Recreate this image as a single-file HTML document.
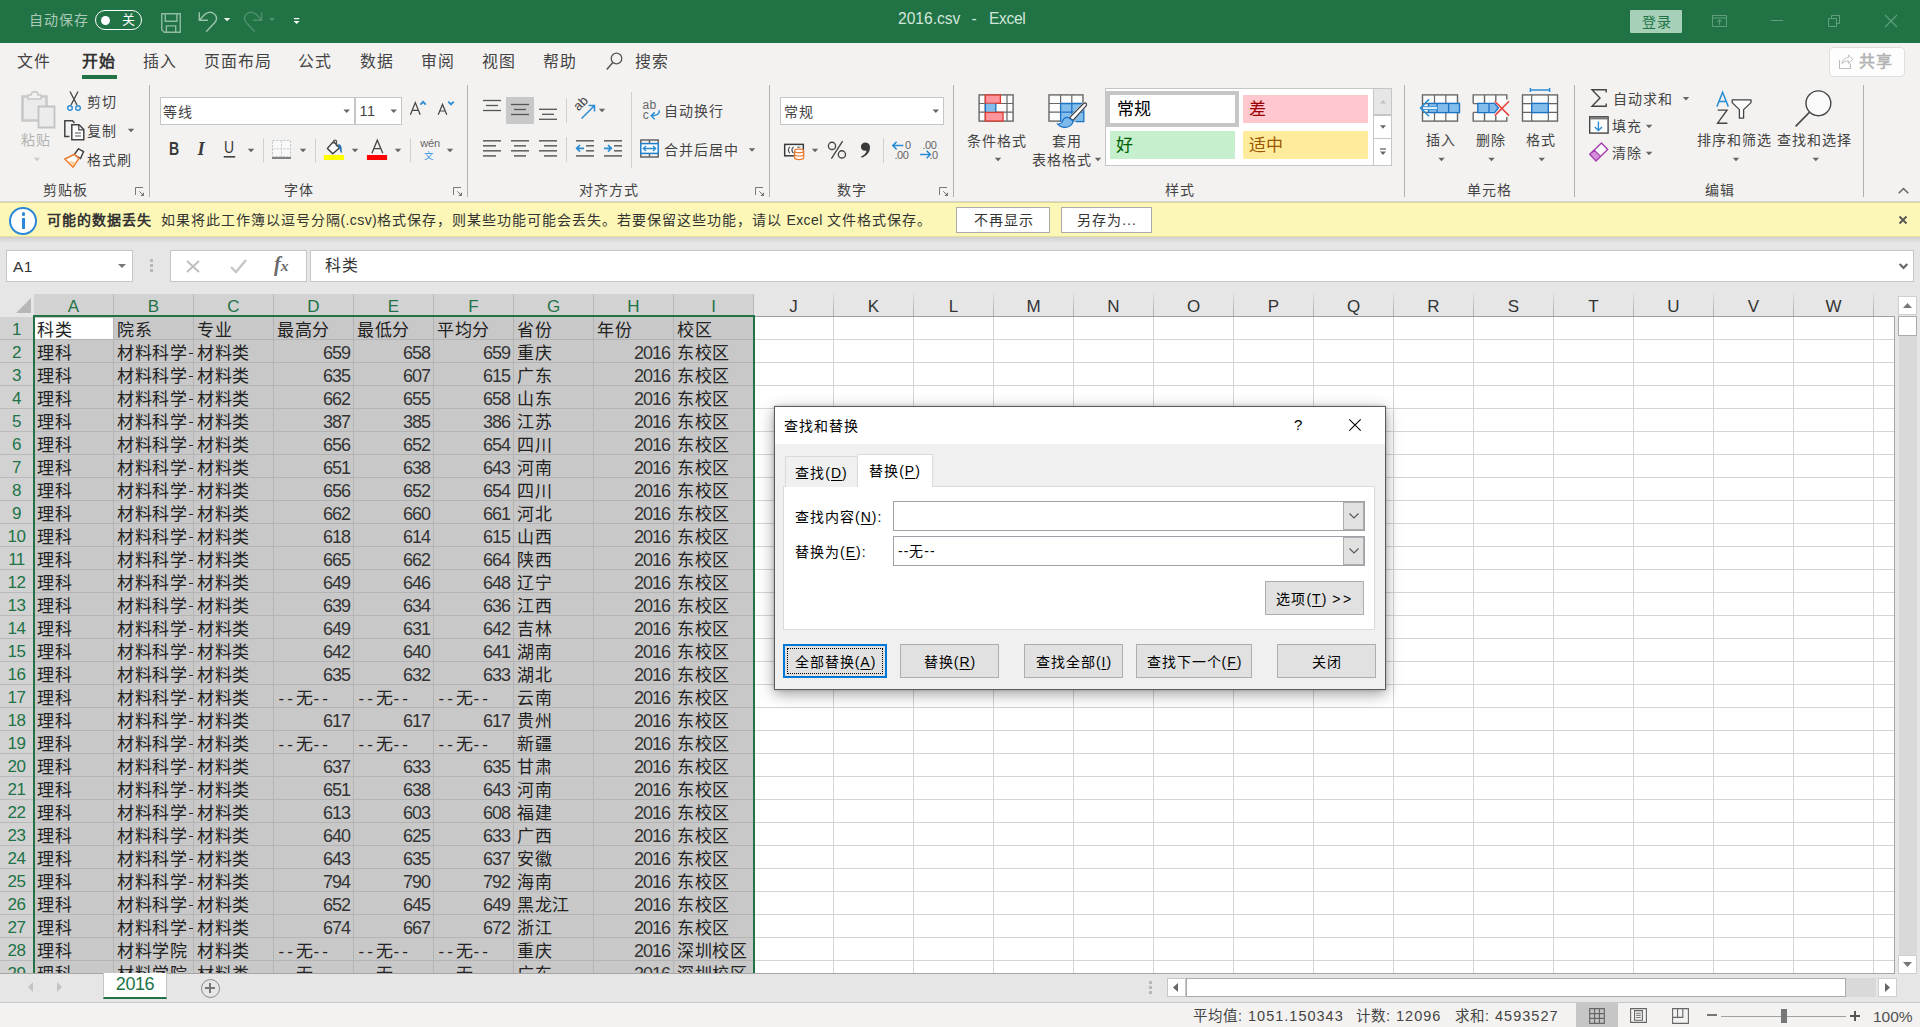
<!DOCTYPE html>
<html lang="zh-CN">
<head>
<meta charset="utf-8">
<title>2016.csv - Excel</title>
<style>
html,body{margin:0;padding:0}
body{width:1920px;height:1027px;overflow:hidden;position:relative;background:#e6e6e6;font-family:"Liberation Sans",sans-serif;font-size:15px;color:#444}
body div,body svg{position:absolute;box-sizing:border-box}
.t{white-space:nowrap}
.i{overflow:visible}
u{text-decoration:underline;text-underline-offset:2px}
.c{width:78px;height:22px;line-height:27px;font-size:17px;letter-spacing:0.7px;color:#222;white-space:nowrap;overflow:hidden;padding-left:3px;font-weight:300}
.c.r{text-align:right;padding-right:2px;padding-left:0;letter-spacing:-1px;font-size:18px;color:#333}
.c .d{letter-spacing:3px}
.l{letter-spacing:0.4px}

</style>
</head>
<body>
<div style="left:0px;top:294px;width:1898px;height:680px;background:#e6e6e6;"></div>
<div style="left:34px;top:317px;width:1860px;height:657px;background:#fff;"></div>
<div style="left:34px;top:317px;width:719px;height:657px;background:#c8c8c8;"></div>
<div style="left:35px;top:318px;width:78px;height:21px;background:#fff;"></div>
<div style="left:34px;top:294px;width:720px;height:21px;background:#d2d2d2;"></div>
<div style="left:0px;top:317px;width:33px;height:657px;background:#d2d2d2;"></div>
<div style="left:0px;top:339px;width:33px;height:1px;background:#b9b9b9;"></div>
<div style="left:35px;top:339px;width:718px;height:1px;background:#b4b4b4;"></div>
<div style="left:755px;top:339px;width:1139px;height:1px;background:#d4d4d4;"></div>
<div style="left:0px;top:362px;width:33px;height:1px;background:#b9b9b9;"></div>
<div style="left:35px;top:362px;width:718px;height:1px;background:#b4b4b4;"></div>
<div style="left:755px;top:362px;width:1139px;height:1px;background:#d4d4d4;"></div>
<div style="left:0px;top:385px;width:33px;height:1px;background:#b9b9b9;"></div>
<div style="left:35px;top:385px;width:718px;height:1px;background:#b4b4b4;"></div>
<div style="left:755px;top:385px;width:1139px;height:1px;background:#d4d4d4;"></div>
<div style="left:0px;top:408px;width:33px;height:1px;background:#b9b9b9;"></div>
<div style="left:35px;top:408px;width:718px;height:1px;background:#b4b4b4;"></div>
<div style="left:755px;top:408px;width:1139px;height:1px;background:#d4d4d4;"></div>
<div style="left:0px;top:431px;width:33px;height:1px;background:#b9b9b9;"></div>
<div style="left:35px;top:431px;width:718px;height:1px;background:#b4b4b4;"></div>
<div style="left:755px;top:431px;width:1139px;height:1px;background:#d4d4d4;"></div>
<div style="left:0px;top:454px;width:33px;height:1px;background:#b9b9b9;"></div>
<div style="left:35px;top:454px;width:718px;height:1px;background:#b4b4b4;"></div>
<div style="left:755px;top:454px;width:1139px;height:1px;background:#d4d4d4;"></div>
<div style="left:0px;top:477px;width:33px;height:1px;background:#b9b9b9;"></div>
<div style="left:35px;top:477px;width:718px;height:1px;background:#b4b4b4;"></div>
<div style="left:755px;top:477px;width:1139px;height:1px;background:#d4d4d4;"></div>
<div style="left:0px;top:500px;width:33px;height:1px;background:#b9b9b9;"></div>
<div style="left:35px;top:500px;width:718px;height:1px;background:#b4b4b4;"></div>
<div style="left:755px;top:500px;width:1139px;height:1px;background:#d4d4d4;"></div>
<div style="left:0px;top:523px;width:33px;height:1px;background:#b9b9b9;"></div>
<div style="left:35px;top:523px;width:718px;height:1px;background:#b4b4b4;"></div>
<div style="left:755px;top:523px;width:1139px;height:1px;background:#d4d4d4;"></div>
<div style="left:0px;top:546px;width:33px;height:1px;background:#b9b9b9;"></div>
<div style="left:35px;top:546px;width:718px;height:1px;background:#b4b4b4;"></div>
<div style="left:755px;top:546px;width:1139px;height:1px;background:#d4d4d4;"></div>
<div style="left:0px;top:569px;width:33px;height:1px;background:#b9b9b9;"></div>
<div style="left:35px;top:569px;width:718px;height:1px;background:#b4b4b4;"></div>
<div style="left:755px;top:569px;width:1139px;height:1px;background:#d4d4d4;"></div>
<div style="left:0px;top:592px;width:33px;height:1px;background:#b9b9b9;"></div>
<div style="left:35px;top:592px;width:718px;height:1px;background:#b4b4b4;"></div>
<div style="left:755px;top:592px;width:1139px;height:1px;background:#d4d4d4;"></div>
<div style="left:0px;top:615px;width:33px;height:1px;background:#b9b9b9;"></div>
<div style="left:35px;top:615px;width:718px;height:1px;background:#b4b4b4;"></div>
<div style="left:755px;top:615px;width:1139px;height:1px;background:#d4d4d4;"></div>
<div style="left:0px;top:638px;width:33px;height:1px;background:#b9b9b9;"></div>
<div style="left:35px;top:638px;width:718px;height:1px;background:#b4b4b4;"></div>
<div style="left:755px;top:638px;width:1139px;height:1px;background:#d4d4d4;"></div>
<div style="left:0px;top:661px;width:33px;height:1px;background:#b9b9b9;"></div>
<div style="left:35px;top:661px;width:718px;height:1px;background:#b4b4b4;"></div>
<div style="left:755px;top:661px;width:1139px;height:1px;background:#d4d4d4;"></div>
<div style="left:0px;top:684px;width:33px;height:1px;background:#b9b9b9;"></div>
<div style="left:35px;top:684px;width:718px;height:1px;background:#b4b4b4;"></div>
<div style="left:755px;top:684px;width:1139px;height:1px;background:#d4d4d4;"></div>
<div style="left:0px;top:707px;width:33px;height:1px;background:#b9b9b9;"></div>
<div style="left:35px;top:707px;width:718px;height:1px;background:#b4b4b4;"></div>
<div style="left:755px;top:707px;width:1139px;height:1px;background:#d4d4d4;"></div>
<div style="left:0px;top:730px;width:33px;height:1px;background:#b9b9b9;"></div>
<div style="left:35px;top:730px;width:718px;height:1px;background:#b4b4b4;"></div>
<div style="left:755px;top:730px;width:1139px;height:1px;background:#d4d4d4;"></div>
<div style="left:0px;top:753px;width:33px;height:1px;background:#b9b9b9;"></div>
<div style="left:35px;top:753px;width:718px;height:1px;background:#b4b4b4;"></div>
<div style="left:755px;top:753px;width:1139px;height:1px;background:#d4d4d4;"></div>
<div style="left:0px;top:776px;width:33px;height:1px;background:#b9b9b9;"></div>
<div style="left:35px;top:776px;width:718px;height:1px;background:#b4b4b4;"></div>
<div style="left:755px;top:776px;width:1139px;height:1px;background:#d4d4d4;"></div>
<div style="left:0px;top:799px;width:33px;height:1px;background:#b9b9b9;"></div>
<div style="left:35px;top:799px;width:718px;height:1px;background:#b4b4b4;"></div>
<div style="left:755px;top:799px;width:1139px;height:1px;background:#d4d4d4;"></div>
<div style="left:0px;top:822px;width:33px;height:1px;background:#b9b9b9;"></div>
<div style="left:35px;top:822px;width:718px;height:1px;background:#b4b4b4;"></div>
<div style="left:755px;top:822px;width:1139px;height:1px;background:#d4d4d4;"></div>
<div style="left:0px;top:845px;width:33px;height:1px;background:#b9b9b9;"></div>
<div style="left:35px;top:845px;width:718px;height:1px;background:#b4b4b4;"></div>
<div style="left:755px;top:845px;width:1139px;height:1px;background:#d4d4d4;"></div>
<div style="left:0px;top:868px;width:33px;height:1px;background:#b9b9b9;"></div>
<div style="left:35px;top:868px;width:718px;height:1px;background:#b4b4b4;"></div>
<div style="left:755px;top:868px;width:1139px;height:1px;background:#d4d4d4;"></div>
<div style="left:0px;top:891px;width:33px;height:1px;background:#b9b9b9;"></div>
<div style="left:35px;top:891px;width:718px;height:1px;background:#b4b4b4;"></div>
<div style="left:755px;top:891px;width:1139px;height:1px;background:#d4d4d4;"></div>
<div style="left:0px;top:914px;width:33px;height:1px;background:#b9b9b9;"></div>
<div style="left:35px;top:914px;width:718px;height:1px;background:#b4b4b4;"></div>
<div style="left:755px;top:914px;width:1139px;height:1px;background:#d4d4d4;"></div>
<div style="left:0px;top:937px;width:33px;height:1px;background:#b9b9b9;"></div>
<div style="left:35px;top:937px;width:718px;height:1px;background:#b4b4b4;"></div>
<div style="left:755px;top:937px;width:1139px;height:1px;background:#d4d4d4;"></div>
<div style="left:0px;top:960px;width:33px;height:1px;background:#b9b9b9;"></div>
<div style="left:35px;top:960px;width:718px;height:1px;background:#b4b4b4;"></div>
<div style="left:755px;top:960px;width:1139px;height:1px;background:#d4d4d4;"></div>
<div style="left:113px;top:317px;width:1px;height:657px;background:#b4b4b4;"></div>
<div style="left:113px;top:294px;width:1px;height:21px;background:#b9b9b9;"></div>
<div style="left:193px;top:317px;width:1px;height:657px;background:#b4b4b4;"></div>
<div style="left:193px;top:294px;width:1px;height:21px;background:#b9b9b9;"></div>
<div style="left:273px;top:317px;width:1px;height:657px;background:#b4b4b4;"></div>
<div style="left:273px;top:294px;width:1px;height:21px;background:#b9b9b9;"></div>
<div style="left:353px;top:317px;width:1px;height:657px;background:#b4b4b4;"></div>
<div style="left:353px;top:294px;width:1px;height:21px;background:#b9b9b9;"></div>
<div style="left:433px;top:317px;width:1px;height:657px;background:#b4b4b4;"></div>
<div style="left:433px;top:294px;width:1px;height:21px;background:#b9b9b9;"></div>
<div style="left:513px;top:317px;width:1px;height:657px;background:#b4b4b4;"></div>
<div style="left:513px;top:294px;width:1px;height:21px;background:#b9b9b9;"></div>
<div style="left:593px;top:317px;width:1px;height:657px;background:#b4b4b4;"></div>
<div style="left:593px;top:294px;width:1px;height:21px;background:#b9b9b9;"></div>
<div style="left:673px;top:317px;width:1px;height:657px;background:#b4b4b4;"></div>
<div style="left:673px;top:294px;width:1px;height:21px;background:#b9b9b9;"></div>
<div style="left:753px;top:294px;width:1px;height:22px;background:#b9b9b9;"></div>
<div style="left:833px;top:317px;width:1px;height:657px;background:#d4d4d4;"></div>
<div style="left:833px;top:294px;width:1px;height:22px;background:linear-gradient(#dcdcdc,#a8a8a8);"></div>
<div style="left:913px;top:317px;width:1px;height:657px;background:#d4d4d4;"></div>
<div style="left:913px;top:294px;width:1px;height:22px;background:linear-gradient(#dcdcdc,#a8a8a8);"></div>
<div style="left:993px;top:317px;width:1px;height:657px;background:#d4d4d4;"></div>
<div style="left:993px;top:294px;width:1px;height:22px;background:linear-gradient(#dcdcdc,#a8a8a8);"></div>
<div style="left:1073px;top:317px;width:1px;height:657px;background:#d4d4d4;"></div>
<div style="left:1073px;top:294px;width:1px;height:22px;background:linear-gradient(#dcdcdc,#a8a8a8);"></div>
<div style="left:1153px;top:317px;width:1px;height:657px;background:#d4d4d4;"></div>
<div style="left:1153px;top:294px;width:1px;height:22px;background:linear-gradient(#dcdcdc,#a8a8a8);"></div>
<div style="left:1233px;top:317px;width:1px;height:657px;background:#d4d4d4;"></div>
<div style="left:1233px;top:294px;width:1px;height:22px;background:linear-gradient(#dcdcdc,#a8a8a8);"></div>
<div style="left:1313px;top:317px;width:1px;height:657px;background:#d4d4d4;"></div>
<div style="left:1313px;top:294px;width:1px;height:22px;background:linear-gradient(#dcdcdc,#a8a8a8);"></div>
<div style="left:1393px;top:317px;width:1px;height:657px;background:#d4d4d4;"></div>
<div style="left:1393px;top:294px;width:1px;height:22px;background:linear-gradient(#dcdcdc,#a8a8a8);"></div>
<div style="left:1473px;top:317px;width:1px;height:657px;background:#d4d4d4;"></div>
<div style="left:1473px;top:294px;width:1px;height:22px;background:linear-gradient(#dcdcdc,#a8a8a8);"></div>
<div style="left:1553px;top:317px;width:1px;height:657px;background:#d4d4d4;"></div>
<div style="left:1553px;top:294px;width:1px;height:22px;background:linear-gradient(#dcdcdc,#a8a8a8);"></div>
<div style="left:1633px;top:317px;width:1px;height:657px;background:#d4d4d4;"></div>
<div style="left:1633px;top:294px;width:1px;height:22px;background:linear-gradient(#dcdcdc,#a8a8a8);"></div>
<div style="left:1713px;top:317px;width:1px;height:657px;background:#d4d4d4;"></div>
<div style="left:1713px;top:294px;width:1px;height:22px;background:linear-gradient(#dcdcdc,#a8a8a8);"></div>
<div style="left:1793px;top:317px;width:1px;height:657px;background:#d4d4d4;"></div>
<div style="left:1793px;top:294px;width:1px;height:22px;background:linear-gradient(#dcdcdc,#a8a8a8);"></div>
<div style="left:1873px;top:317px;width:1px;height:657px;background:#d4d4d4;"></div>
<div style="left:1873px;top:294px;width:1px;height:22px;background:linear-gradient(#dcdcdc,#a8a8a8);"></div>
<div style="left:755px;top:316px;width:1140px;height:1px;background:#9f9f9f;"></div>
<div style="left:1894px;top:316px;width:1px;height:658px;background:#a6a6a6;"></div>
<svg class="i" style="left:16px;top:298px;" width="15" height="15" viewBox="0 0 15 15"><path d="M15 0V15H0Z" fill="#b7b7b7"/></svg>
<div class="t" style="left:34.5px;top:295.5px;font-size:17px;line-height:22px;color:#217346;width:78px;text-align:center;">A</div>
<div class="t" style="left:114.5px;top:295.5px;font-size:17px;line-height:22px;color:#217346;width:78px;text-align:center;">B</div>
<div class="t" style="left:194.5px;top:295.5px;font-size:17px;line-height:22px;color:#217346;width:78px;text-align:center;">C</div>
<div class="t" style="left:274.5px;top:295.5px;font-size:17px;line-height:22px;color:#217346;width:78px;text-align:center;">D</div>
<div class="t" style="left:354.5px;top:295.5px;font-size:17px;line-height:22px;color:#217346;width:78px;text-align:center;">E</div>
<div class="t" style="left:434.5px;top:295.5px;font-size:17px;line-height:22px;color:#217346;width:78px;text-align:center;">F</div>
<div class="t" style="left:514.5px;top:295.5px;font-size:17px;line-height:22px;color:#217346;width:78px;text-align:center;">G</div>
<div class="t" style="left:594.5px;top:295.5px;font-size:17px;line-height:22px;color:#217346;width:78px;text-align:center;">H</div>
<div class="t" style="left:674.5px;top:295.5px;font-size:17px;line-height:22px;color:#217346;width:78px;text-align:center;">I</div>
<div class="t" style="left:754.5px;top:295.5px;font-size:17px;line-height:22px;color:#333;width:78px;text-align:center;">J</div>
<div class="t" style="left:834.5px;top:295.5px;font-size:17px;line-height:22px;color:#333;width:78px;text-align:center;">K</div>
<div class="t" style="left:914.5px;top:295.5px;font-size:17px;line-height:22px;color:#333;width:78px;text-align:center;">L</div>
<div class="t" style="left:994.5px;top:295.5px;font-size:17px;line-height:22px;color:#333;width:78px;text-align:center;">M</div>
<div class="t" style="left:1074.5px;top:295.5px;font-size:17px;line-height:22px;color:#333;width:78px;text-align:center;">N</div>
<div class="t" style="left:1154.5px;top:295.5px;font-size:17px;line-height:22px;color:#333;width:78px;text-align:center;">O</div>
<div class="t" style="left:1234.5px;top:295.5px;font-size:17px;line-height:22px;color:#333;width:78px;text-align:center;">P</div>
<div class="t" style="left:1314.5px;top:295.5px;font-size:17px;line-height:22px;color:#333;width:78px;text-align:center;">Q</div>
<div class="t" style="left:1394.5px;top:295.5px;font-size:17px;line-height:22px;color:#333;width:78px;text-align:center;">R</div>
<div class="t" style="left:1474.5px;top:295.5px;font-size:17px;line-height:22px;color:#333;width:78px;text-align:center;">S</div>
<div class="t" style="left:1554.5px;top:295.5px;font-size:17px;line-height:22px;color:#333;width:78px;text-align:center;">T</div>
<div class="t" style="left:1634.5px;top:295.5px;font-size:17px;line-height:22px;color:#333;width:78px;text-align:center;">U</div>
<div class="t" style="left:1714.5px;top:295.5px;font-size:17px;line-height:22px;color:#333;width:78px;text-align:center;">V</div>
<div class="t" style="left:1794.5px;top:295.5px;font-size:17px;line-height:22px;color:#333;width:78px;text-align:center;">W</div>
<div class="t" style="left:0.0px;top:318.5px;font-size:17px;line-height:22px;color:#217346;width:33px;text-align:center;letter-spacing:-0.5px;">1</div>
<div class="t" style="left:0.0px;top:341.5px;font-size:17px;line-height:22px;color:#217346;width:33px;text-align:center;letter-spacing:-0.5px;">2</div>
<div class="t" style="left:0.0px;top:364.5px;font-size:17px;line-height:22px;color:#217346;width:33px;text-align:center;letter-spacing:-0.5px;">3</div>
<div class="t" style="left:0.0px;top:387.5px;font-size:17px;line-height:22px;color:#217346;width:33px;text-align:center;letter-spacing:-0.5px;">4</div>
<div class="t" style="left:0.0px;top:410.5px;font-size:17px;line-height:22px;color:#217346;width:33px;text-align:center;letter-spacing:-0.5px;">5</div>
<div class="t" style="left:0.0px;top:433.5px;font-size:17px;line-height:22px;color:#217346;width:33px;text-align:center;letter-spacing:-0.5px;">6</div>
<div class="t" style="left:0.0px;top:456.5px;font-size:17px;line-height:22px;color:#217346;width:33px;text-align:center;letter-spacing:-0.5px;">7</div>
<div class="t" style="left:0.0px;top:479.5px;font-size:17px;line-height:22px;color:#217346;width:33px;text-align:center;letter-spacing:-0.5px;">8</div>
<div class="t" style="left:0.0px;top:502.5px;font-size:17px;line-height:22px;color:#217346;width:33px;text-align:center;letter-spacing:-0.5px;">9</div>
<div class="t" style="left:0.0px;top:525.5px;font-size:17px;line-height:22px;color:#217346;width:33px;text-align:center;letter-spacing:-0.5px;">10</div>
<div class="t" style="left:0.0px;top:548.5px;font-size:17px;line-height:22px;color:#217346;width:33px;text-align:center;letter-spacing:-0.5px;">11</div>
<div class="t" style="left:0.0px;top:571.5px;font-size:17px;line-height:22px;color:#217346;width:33px;text-align:center;letter-spacing:-0.5px;">12</div>
<div class="t" style="left:0.0px;top:594.5px;font-size:17px;line-height:22px;color:#217346;width:33px;text-align:center;letter-spacing:-0.5px;">13</div>
<div class="t" style="left:0.0px;top:617.5px;font-size:17px;line-height:22px;color:#217346;width:33px;text-align:center;letter-spacing:-0.5px;">14</div>
<div class="t" style="left:0.0px;top:640.5px;font-size:17px;line-height:22px;color:#217346;width:33px;text-align:center;letter-spacing:-0.5px;">15</div>
<div class="t" style="left:0.0px;top:663.5px;font-size:17px;line-height:22px;color:#217346;width:33px;text-align:center;letter-spacing:-0.5px;">16</div>
<div class="t" style="left:0.0px;top:686.5px;font-size:17px;line-height:22px;color:#217346;width:33px;text-align:center;letter-spacing:-0.5px;">17</div>
<div class="t" style="left:0.0px;top:709.5px;font-size:17px;line-height:22px;color:#217346;width:33px;text-align:center;letter-spacing:-0.5px;">18</div>
<div class="t" style="left:0.0px;top:732.5px;font-size:17px;line-height:22px;color:#217346;width:33px;text-align:center;letter-spacing:-0.5px;">19</div>
<div class="t" style="left:0.0px;top:755.5px;font-size:17px;line-height:22px;color:#217346;width:33px;text-align:center;letter-spacing:-0.5px;">20</div>
<div class="t" style="left:0.0px;top:778.5px;font-size:17px;line-height:22px;color:#217346;width:33px;text-align:center;letter-spacing:-0.5px;">21</div>
<div class="t" style="left:0.0px;top:801.5px;font-size:17px;line-height:22px;color:#217346;width:33px;text-align:center;letter-spacing:-0.5px;">22</div>
<div class="t" style="left:0.0px;top:824.5px;font-size:17px;line-height:22px;color:#217346;width:33px;text-align:center;letter-spacing:-0.5px;">23</div>
<div class="t" style="left:0.0px;top:847.5px;font-size:17px;line-height:22px;color:#217346;width:33px;text-align:center;letter-spacing:-0.5px;">24</div>
<div class="t" style="left:0.0px;top:870.5px;font-size:17px;line-height:22px;color:#217346;width:33px;text-align:center;letter-spacing:-0.5px;">25</div>
<div class="t" style="left:0.0px;top:893.5px;font-size:17px;line-height:22px;color:#217346;width:33px;text-align:center;letter-spacing:-0.5px;">26</div>
<div class="t" style="left:0.0px;top:916.5px;font-size:17px;line-height:22px;color:#217346;width:33px;text-align:center;letter-spacing:-0.5px;">27</div>
<div class="t" style="left:0.0px;top:939.5px;font-size:17px;line-height:22px;color:#217346;width:33px;text-align:center;letter-spacing:-0.5px;">28</div>
<div class="t" style="left:0.0px;top:962.5px;font-size:17px;line-height:22px;color:#217346;width:33px;text-align:center;letter-spacing:-0.5px;">29</div>
<div style="left:0;top:294px;width:1898px;height:679px;overflow:hidden;"><div style="left:0;top:-294px;width:1898px;height:980px;">
<div class="c" style="left:34px;top:317px;">科类</div>
<div class="c" style="left:114px;top:317px;">院系</div>
<div class="c" style="left:194px;top:317px;">专业</div>
<div class="c" style="left:274px;top:317px;">最高分</div>
<div class="c" style="left:354px;top:317px;">最低分</div>
<div class="c" style="left:434px;top:317px;">平均分</div>
<div class="c" style="left:514px;top:317px;">省份</div>
<div class="c" style="left:594px;top:317px;">年份</div>
<div class="c" style="left:674px;top:317px;">校区</div>
<div class="c" style="left:34px;top:340px;">理科</div>
<div class="c" style="left:114px;top:340px;width:74px;">材料科学与工程学院</div>
<div style="left:188.5px;top:353px;width:4px;height:1.2px;background:#222;"></div>
<div class="c" style="left:194px;top:340px;">材料类</div>
<div class="c r" style="left:274px;top:340px;">659</div>
<div class="c r" style="left:354px;top:340px;">658</div>
<div class="c r" style="left:434px;top:340px;">659</div>
<div class="c" style="left:514px;top:340px;">重庆</div>
<div class="c r" style="left:594px;top:340px;">2016</div>
<div class="c" style="left:674px;top:340px;">东校区</div>
<div class="c" style="left:34px;top:363px;">理科</div>
<div class="c" style="left:114px;top:363px;width:74px;">材料科学与工程学院</div>
<div style="left:188.5px;top:376px;width:4px;height:1.2px;background:#222;"></div>
<div class="c" style="left:194px;top:363px;">材料类</div>
<div class="c r" style="left:274px;top:363px;">635</div>
<div class="c r" style="left:354px;top:363px;">607</div>
<div class="c r" style="left:434px;top:363px;">615</div>
<div class="c" style="left:514px;top:363px;">广东</div>
<div class="c r" style="left:594px;top:363px;">2016</div>
<div class="c" style="left:674px;top:363px;">东校区</div>
<div class="c" style="left:34px;top:386px;">理科</div>
<div class="c" style="left:114px;top:386px;width:74px;">材料科学与工程学院</div>
<div style="left:188.5px;top:399px;width:4px;height:1.2px;background:#222;"></div>
<div class="c" style="left:194px;top:386px;">材料类</div>
<div class="c r" style="left:274px;top:386px;">662</div>
<div class="c r" style="left:354px;top:386px;">655</div>
<div class="c r" style="left:434px;top:386px;">658</div>
<div class="c" style="left:514px;top:386px;">山东</div>
<div class="c r" style="left:594px;top:386px;">2016</div>
<div class="c" style="left:674px;top:386px;">东校区</div>
<div class="c" style="left:34px;top:409px;">理科</div>
<div class="c" style="left:114px;top:409px;width:74px;">材料科学与工程学院</div>
<div style="left:188.5px;top:422px;width:4px;height:1.2px;background:#222;"></div>
<div class="c" style="left:194px;top:409px;">材料类</div>
<div class="c r" style="left:274px;top:409px;">387</div>
<div class="c r" style="left:354px;top:409px;">385</div>
<div class="c r" style="left:434px;top:409px;">386</div>
<div class="c" style="left:514px;top:409px;">江苏</div>
<div class="c r" style="left:594px;top:409px;">2016</div>
<div class="c" style="left:674px;top:409px;">东校区</div>
<div class="c" style="left:34px;top:432px;">理科</div>
<div class="c" style="left:114px;top:432px;width:74px;">材料科学与工程学院</div>
<div style="left:188.5px;top:445px;width:4px;height:1.2px;background:#222;"></div>
<div class="c" style="left:194px;top:432px;">材料类</div>
<div class="c r" style="left:274px;top:432px;">656</div>
<div class="c r" style="left:354px;top:432px;">652</div>
<div class="c r" style="left:434px;top:432px;">654</div>
<div class="c" style="left:514px;top:432px;">四川</div>
<div class="c r" style="left:594px;top:432px;">2016</div>
<div class="c" style="left:674px;top:432px;">东校区</div>
<div class="c" style="left:34px;top:455px;">理科</div>
<div class="c" style="left:114px;top:455px;width:74px;">材料科学与工程学院</div>
<div style="left:188.5px;top:468px;width:4px;height:1.2px;background:#222;"></div>
<div class="c" style="left:194px;top:455px;">材料类</div>
<div class="c r" style="left:274px;top:455px;">651</div>
<div class="c r" style="left:354px;top:455px;">638</div>
<div class="c r" style="left:434px;top:455px;">643</div>
<div class="c" style="left:514px;top:455px;">河南</div>
<div class="c r" style="left:594px;top:455px;">2016</div>
<div class="c" style="left:674px;top:455px;">东校区</div>
<div class="c" style="left:34px;top:478px;">理科</div>
<div class="c" style="left:114px;top:478px;width:74px;">材料科学与工程学院</div>
<div style="left:188.5px;top:491px;width:4px;height:1.2px;background:#222;"></div>
<div class="c" style="left:194px;top:478px;">材料类</div>
<div class="c r" style="left:274px;top:478px;">656</div>
<div class="c r" style="left:354px;top:478px;">652</div>
<div class="c r" style="left:434px;top:478px;">654</div>
<div class="c" style="left:514px;top:478px;">四川</div>
<div class="c r" style="left:594px;top:478px;">2016</div>
<div class="c" style="left:674px;top:478px;">东校区</div>
<div class="c" style="left:34px;top:501px;">理科</div>
<div class="c" style="left:114px;top:501px;width:74px;">材料科学与工程学院</div>
<div style="left:188.5px;top:514px;width:4px;height:1.2px;background:#222;"></div>
<div class="c" style="left:194px;top:501px;">材料类</div>
<div class="c r" style="left:274px;top:501px;">662</div>
<div class="c r" style="left:354px;top:501px;">660</div>
<div class="c r" style="left:434px;top:501px;">661</div>
<div class="c" style="left:514px;top:501px;">河北</div>
<div class="c r" style="left:594px;top:501px;">2016</div>
<div class="c" style="left:674px;top:501px;">东校区</div>
<div class="c" style="left:34px;top:524px;">理科</div>
<div class="c" style="left:114px;top:524px;width:74px;">材料科学与工程学院</div>
<div style="left:188.5px;top:537px;width:4px;height:1.2px;background:#222;"></div>
<div class="c" style="left:194px;top:524px;">材料类</div>
<div class="c r" style="left:274px;top:524px;">618</div>
<div class="c r" style="left:354px;top:524px;">614</div>
<div class="c r" style="left:434px;top:524px;">615</div>
<div class="c" style="left:514px;top:524px;">山西</div>
<div class="c r" style="left:594px;top:524px;">2016</div>
<div class="c" style="left:674px;top:524px;">东校区</div>
<div class="c" style="left:34px;top:547px;">理科</div>
<div class="c" style="left:114px;top:547px;width:74px;">材料科学与工程学院</div>
<div style="left:188.5px;top:560px;width:4px;height:1.2px;background:#222;"></div>
<div class="c" style="left:194px;top:547px;">材料类</div>
<div class="c r" style="left:274px;top:547px;">665</div>
<div class="c r" style="left:354px;top:547px;">662</div>
<div class="c r" style="left:434px;top:547px;">664</div>
<div class="c" style="left:514px;top:547px;">陕西</div>
<div class="c r" style="left:594px;top:547px;">2016</div>
<div class="c" style="left:674px;top:547px;">东校区</div>
<div class="c" style="left:34px;top:570px;">理科</div>
<div class="c" style="left:114px;top:570px;width:74px;">材料科学与工程学院</div>
<div style="left:188.5px;top:583px;width:4px;height:1.2px;background:#222;"></div>
<div class="c" style="left:194px;top:570px;">材料类</div>
<div class="c r" style="left:274px;top:570px;">649</div>
<div class="c r" style="left:354px;top:570px;">646</div>
<div class="c r" style="left:434px;top:570px;">648</div>
<div class="c" style="left:514px;top:570px;">辽宁</div>
<div class="c r" style="left:594px;top:570px;">2016</div>
<div class="c" style="left:674px;top:570px;">东校区</div>
<div class="c" style="left:34px;top:593px;">理科</div>
<div class="c" style="left:114px;top:593px;width:74px;">材料科学与工程学院</div>
<div style="left:188.5px;top:606px;width:4px;height:1.2px;background:#222;"></div>
<div class="c" style="left:194px;top:593px;">材料类</div>
<div class="c r" style="left:274px;top:593px;">639</div>
<div class="c r" style="left:354px;top:593px;">634</div>
<div class="c r" style="left:434px;top:593px;">636</div>
<div class="c" style="left:514px;top:593px;">江西</div>
<div class="c r" style="left:594px;top:593px;">2016</div>
<div class="c" style="left:674px;top:593px;">东校区</div>
<div class="c" style="left:34px;top:616px;">理科</div>
<div class="c" style="left:114px;top:616px;width:74px;">材料科学与工程学院</div>
<div style="left:188.5px;top:629px;width:4px;height:1.2px;background:#222;"></div>
<div class="c" style="left:194px;top:616px;">材料类</div>
<div class="c r" style="left:274px;top:616px;">649</div>
<div class="c r" style="left:354px;top:616px;">631</div>
<div class="c r" style="left:434px;top:616px;">642</div>
<div class="c" style="left:514px;top:616px;">吉林</div>
<div class="c r" style="left:594px;top:616px;">2016</div>
<div class="c" style="left:674px;top:616px;">东校区</div>
<div class="c" style="left:34px;top:639px;">理科</div>
<div class="c" style="left:114px;top:639px;width:74px;">材料科学与工程学院</div>
<div style="left:188.5px;top:652px;width:4px;height:1.2px;background:#222;"></div>
<div class="c" style="left:194px;top:639px;">材料类</div>
<div class="c r" style="left:274px;top:639px;">642</div>
<div class="c r" style="left:354px;top:639px;">640</div>
<div class="c r" style="left:434px;top:639px;">641</div>
<div class="c" style="left:514px;top:639px;">湖南</div>
<div class="c r" style="left:594px;top:639px;">2016</div>
<div class="c" style="left:674px;top:639px;">东校区</div>
<div class="c" style="left:34px;top:662px;">理科</div>
<div class="c" style="left:114px;top:662px;width:74px;">材料科学与工程学院</div>
<div style="left:188.5px;top:675px;width:4px;height:1.2px;background:#222;"></div>
<div class="c" style="left:194px;top:662px;">材料类</div>
<div class="c r" style="left:274px;top:662px;">635</div>
<div class="c r" style="left:354px;top:662px;">632</div>
<div class="c r" style="left:434px;top:662px;">633</div>
<div class="c" style="left:514px;top:662px;">湖北</div>
<div class="c r" style="left:594px;top:662px;">2016</div>
<div class="c" style="left:674px;top:662px;">东校区</div>
<div class="c" style="left:34px;top:685px;">理科</div>
<div class="c" style="left:114px;top:685px;width:74px;">材料科学与工程学院</div>
<div style="left:188.5px;top:698px;width:4px;height:1.2px;background:#222;"></div>
<div class="c" style="left:194px;top:685px;">材料类</div>
<div class="c" style="left:274px;top:685px;padding-left:4.5px;"><span class="d">--</span>无<span class="d">--</span></div>
<div class="c" style="left:354px;top:685px;padding-left:4.5px;"><span class="d">--</span>无<span class="d">--</span></div>
<div class="c" style="left:434px;top:685px;padding-left:4.5px;"><span class="d">--</span>无<span class="d">--</span></div>
<div class="c" style="left:514px;top:685px;">云南</div>
<div class="c r" style="left:594px;top:685px;">2016</div>
<div class="c" style="left:674px;top:685px;">东校区</div>
<div class="c" style="left:34px;top:708px;">理科</div>
<div class="c" style="left:114px;top:708px;width:74px;">材料科学与工程学院</div>
<div style="left:188.5px;top:721px;width:4px;height:1.2px;background:#222;"></div>
<div class="c" style="left:194px;top:708px;">材料类</div>
<div class="c r" style="left:274px;top:708px;">617</div>
<div class="c r" style="left:354px;top:708px;">617</div>
<div class="c r" style="left:434px;top:708px;">617</div>
<div class="c" style="left:514px;top:708px;">贵州</div>
<div class="c r" style="left:594px;top:708px;">2016</div>
<div class="c" style="left:674px;top:708px;">东校区</div>
<div class="c" style="left:34px;top:731px;">理科</div>
<div class="c" style="left:114px;top:731px;width:74px;">材料科学与工程学院</div>
<div style="left:188.5px;top:744px;width:4px;height:1.2px;background:#222;"></div>
<div class="c" style="left:194px;top:731px;">材料类</div>
<div class="c" style="left:274px;top:731px;padding-left:4.5px;"><span class="d">--</span>无<span class="d">--</span></div>
<div class="c" style="left:354px;top:731px;padding-left:4.5px;"><span class="d">--</span>无<span class="d">--</span></div>
<div class="c" style="left:434px;top:731px;padding-left:4.5px;"><span class="d">--</span>无<span class="d">--</span></div>
<div class="c" style="left:514px;top:731px;">新疆</div>
<div class="c r" style="left:594px;top:731px;">2016</div>
<div class="c" style="left:674px;top:731px;">东校区</div>
<div class="c" style="left:34px;top:754px;">理科</div>
<div class="c" style="left:114px;top:754px;width:74px;">材料科学与工程学院</div>
<div style="left:188.5px;top:767px;width:4px;height:1.2px;background:#222;"></div>
<div class="c" style="left:194px;top:754px;">材料类</div>
<div class="c r" style="left:274px;top:754px;">637</div>
<div class="c r" style="left:354px;top:754px;">633</div>
<div class="c r" style="left:434px;top:754px;">635</div>
<div class="c" style="left:514px;top:754px;">甘肃</div>
<div class="c r" style="left:594px;top:754px;">2016</div>
<div class="c" style="left:674px;top:754px;">东校区</div>
<div class="c" style="left:34px;top:777px;">理科</div>
<div class="c" style="left:114px;top:777px;width:74px;">材料科学与工程学院</div>
<div style="left:188.5px;top:790px;width:4px;height:1.2px;background:#222;"></div>
<div class="c" style="left:194px;top:777px;">材料类</div>
<div class="c r" style="left:274px;top:777px;">651</div>
<div class="c r" style="left:354px;top:777px;">638</div>
<div class="c r" style="left:434px;top:777px;">643</div>
<div class="c" style="left:514px;top:777px;">河南</div>
<div class="c r" style="left:594px;top:777px;">2016</div>
<div class="c" style="left:674px;top:777px;">东校区</div>
<div class="c" style="left:34px;top:800px;">理科</div>
<div class="c" style="left:114px;top:800px;width:74px;">材料科学与工程学院</div>
<div style="left:188.5px;top:813px;width:4px;height:1.2px;background:#222;"></div>
<div class="c" style="left:194px;top:800px;">材料类</div>
<div class="c r" style="left:274px;top:800px;">613</div>
<div class="c r" style="left:354px;top:800px;">603</div>
<div class="c r" style="left:434px;top:800px;">608</div>
<div class="c" style="left:514px;top:800px;">福建</div>
<div class="c r" style="left:594px;top:800px;">2016</div>
<div class="c" style="left:674px;top:800px;">东校区</div>
<div class="c" style="left:34px;top:823px;">理科</div>
<div class="c" style="left:114px;top:823px;width:74px;">材料科学与工程学院</div>
<div style="left:188.5px;top:836px;width:4px;height:1.2px;background:#222;"></div>
<div class="c" style="left:194px;top:823px;">材料类</div>
<div class="c r" style="left:274px;top:823px;">640</div>
<div class="c r" style="left:354px;top:823px;">625</div>
<div class="c r" style="left:434px;top:823px;">633</div>
<div class="c" style="left:514px;top:823px;">广西</div>
<div class="c r" style="left:594px;top:823px;">2016</div>
<div class="c" style="left:674px;top:823px;">东校区</div>
<div class="c" style="left:34px;top:846px;">理科</div>
<div class="c" style="left:114px;top:846px;width:74px;">材料科学与工程学院</div>
<div style="left:188.5px;top:859px;width:4px;height:1.2px;background:#222;"></div>
<div class="c" style="left:194px;top:846px;">材料类</div>
<div class="c r" style="left:274px;top:846px;">643</div>
<div class="c r" style="left:354px;top:846px;">635</div>
<div class="c r" style="left:434px;top:846px;">637</div>
<div class="c" style="left:514px;top:846px;">安徽</div>
<div class="c r" style="left:594px;top:846px;">2016</div>
<div class="c" style="left:674px;top:846px;">东校区</div>
<div class="c" style="left:34px;top:869px;">理科</div>
<div class="c" style="left:114px;top:869px;width:74px;">材料科学与工程学院</div>
<div style="left:188.5px;top:882px;width:4px;height:1.2px;background:#222;"></div>
<div class="c" style="left:194px;top:869px;">材料类</div>
<div class="c r" style="left:274px;top:869px;">794</div>
<div class="c r" style="left:354px;top:869px;">790</div>
<div class="c r" style="left:434px;top:869px;">792</div>
<div class="c" style="left:514px;top:869px;">海南</div>
<div class="c r" style="left:594px;top:869px;">2016</div>
<div class="c" style="left:674px;top:869px;">东校区</div>
<div class="c" style="left:34px;top:892px;">理科</div>
<div class="c" style="left:114px;top:892px;width:74px;">材料科学与工程学院</div>
<div style="left:188.5px;top:905px;width:4px;height:1.2px;background:#222;"></div>
<div class="c" style="left:194px;top:892px;">材料类</div>
<div class="c r" style="left:274px;top:892px;">652</div>
<div class="c r" style="left:354px;top:892px;">645</div>
<div class="c r" style="left:434px;top:892px;">649</div>
<div class="c" style="left:514px;top:892px;">黑龙江</div>
<div class="c r" style="left:594px;top:892px;">2016</div>
<div class="c" style="left:674px;top:892px;">东校区</div>
<div class="c" style="left:34px;top:915px;">理科</div>
<div class="c" style="left:114px;top:915px;width:74px;">材料科学与工程学院</div>
<div style="left:188.5px;top:928px;width:4px;height:1.2px;background:#222;"></div>
<div class="c" style="left:194px;top:915px;">材料类</div>
<div class="c r" style="left:274px;top:915px;">674</div>
<div class="c r" style="left:354px;top:915px;">667</div>
<div class="c r" style="left:434px;top:915px;">672</div>
<div class="c" style="left:514px;top:915px;">浙江</div>
<div class="c r" style="left:594px;top:915px;">2016</div>
<div class="c" style="left:674px;top:915px;">东校区</div>
<div class="c" style="left:34px;top:938px;">理科</div>
<div class="c" style="left:114px;top:938px;">材料学院</div>
<div class="c" style="left:194px;top:938px;">材料类</div>
<div class="c" style="left:274px;top:938px;padding-left:4.5px;"><span class="d">--</span>无<span class="d">--</span></div>
<div class="c" style="left:354px;top:938px;padding-left:4.5px;"><span class="d">--</span>无<span class="d">--</span></div>
<div class="c" style="left:434px;top:938px;padding-left:4.5px;"><span class="d">--</span>无<span class="d">--</span></div>
<div class="c" style="left:514px;top:938px;">重庆</div>
<div class="c r" style="left:594px;top:938px;">2016</div>
<div class="c" style="left:674px;top:938px;">深圳校区</div>
<div class="c" style="left:34px;top:961px;">理科</div>
<div class="c" style="left:114px;top:961px;">材料学院</div>
<div class="c" style="left:194px;top:961px;">材料类</div>
<div class="c" style="left:274px;top:961px;padding-left:4.5px;"><span class="d">--</span>无<span class="d">--</span></div>
<div class="c" style="left:354px;top:961px;padding-left:4.5px;"><span class="d">--</span>无<span class="d">--</span></div>
<div class="c" style="left:434px;top:961px;padding-left:4.5px;"><span class="d">--</span>无<span class="d">--</span></div>
<div class="c" style="left:514px;top:961px;">广东</div>
<div class="c r" style="left:594px;top:961px;">2016</div>
<div class="c" style="left:674px;top:961px;">深圳校区</div>
</div></div>
<div style="left:33px;top:315px;width:722px;height:2px;background:#217346;"></div>
<div style="left:33px;top:315px;width:2px;height:659px;background:#217346;"></div>
<div style="left:753px;top:315px;width:2px;height:659px;background:#217346;"></div>
<div style="left:0px;top:973px;width:1895px;height:1px;background:#a6a6a6;"></div>
<div style="left:1898px;top:294px;width:19px;height:680px;background:#e6e6e6;"></div>
<div style="left:1898.5px;top:335px;width:18px;height:620px;background:#d9d9d9;"></div>
<div style="left:1898px;top:296px;width:19px;height:18.5px;background:#fff;border:1px solid #cfcfcf;"></div>
<svg class="i" style="left:1903px;top:302.8px;" width="9" height="5" viewBox="0 0 9 5"><path d="M0 5H9L4.5 0Z" fill="#777"/></svg>
<div style="left:1898px;top:315.5px;width:19px;height:20px;background:#fff;border:1px solid #ababab;"></div>
<div style="left:1898px;top:955px;width:19px;height:18.5px;background:#fff;border:1px solid #cfcfcf;"></div>
<svg class="i" style="left:1903px;top:962px;" width="9" height="5" viewBox="0 0 9 5"><path d="M0 0H9L4.5 5Z" fill="#777"/></svg>
<div style="left:0px;top:0px;width:1920px;height:43px;background:#217346;"></div>
<div class="t" style="left:28.5px;top:9.8px;font-size:14.0px;line-height:20px;letter-spacing:1.0px;color:#a9cbb8;">自动保存</div>
<div style="left:95px;top:10px;width:47px;height:20px;border:1.5px solid #fff;border-radius:10px;"></div>
<div style="left:100.5px;top:15.5px;width:9px;height:9px;background:#fff;border-radius:50%;"></div>
<div class="t" style="left:122px;top:10.5px;font-size:13px;line-height:18px;color:#fff;">关</div>
<svg class="i" style="left:0;top:0" width="1920" height="43" viewBox="0 0 1920 43"><path d="M161.75 13.75H180.25V32.25H164.2L161.75 29.8Z M165.3 13.75V21.3H176.9V13.75 M166.4 32.25V25.9H175.7V32.25" fill="none" stroke="#8fbca3" stroke-width="1.4"/><path d="M199.3 12.3V20.2H207.9 M199.8 19.7L204.6 14.6C207.2 12 211.5 11.4 214.3 13.9C217.2 16.6 217 20 214.6 22.7L206.2 31.7" fill="none" stroke="#9cc4ae" stroke-width="1.4"/><path d="M223.9 18.0h6.4l-3.2 3.2z" fill="#eef5f1"/><path d="M261.7 12.3V20.2H253.1 M261.2 19.7L256.4 14.6C253.8 12 249.5 11.4 246.7 13.9C243.8 16.6 244 20 246.4 22.7L254.8 31.7" fill="none" stroke="#4e9069" stroke-width="1.4"/><path d="M268.7 18.0h6.4l-3.2 3.2z" fill="#4e9069"/><path d="M294 18.6H299.3" stroke="#fff" stroke-width="1.2"/><path d="M293.65 20.9h6l-3.0 3.2z" fill="#fff"/><path d="M1712.5 15.5H1726.5V26.5H1712.5Z M1712.5 18H1726.5 M1719.5 25V20 M1717 22L1719.5 19.8L1722 22" fill="none" stroke="#5fa07c" stroke-width="1"/><path d="M1771 20.5H1783" stroke="#5fa07c" stroke-width="1"/><path d="M1828.5 18.5H1836.5V26.5H1828.5Z M1831.5 18.5V15.5H1839.5V23.5H1836.5" fill="none" stroke="#5fa07c" stroke-width="1"/><path d="M1885 15L1897 27M1897 15L1885 27" fill="none" stroke="#5fa07c" stroke-width="1.1"/></svg>
<div class="t" style="left:898px;top:8.0px;font-size:15.6px;line-height:21px;color:#d3e6da;">2016.csv<span style="letter-spacing:1.2px">&nbsp; - &nbsp;</span><span style="letter-spacing:-0.35px">Excel</span></div>
<div style="left:1630px;top:10px;width:52px;height:23px;background:#a6d1b8;border-radius:1px;"></div>
<div class="t" style="left:1630.5px;top:11.5px;font-size:14.0px;line-height:20px;letter-spacing:1.0px;color:#217346;width:52px;text-align:center;">登录</div>
<svg class="i" style="left:0;top:0;z-index:1" width="1920" height="202" viewBox="0 0 1920 202"><circle cx="616.5" cy="58.5" r="5.3" fill="none" stroke="#555" stroke-width="1.3"/><path d="M612.8 62.5L606.8 69.5" stroke="#555" stroke-width="1.5"/><path d="M1839.5 60V68.5H1850.5V63.5" stroke="#bdbdbd" stroke-width="1.1" fill="none"/><path d="M1842 63.6C1842.8 59.6 1845.6 57.6 1848.4 57.6V54.9L1852.8 59.2L1848.4 63.5V60.9C1845.8 60.9 1843.6 61.8 1842 63.6Z" stroke="#bdbdbd" stroke-width="1" fill="#fdfdfd" stroke-linejoin="round"/><path d="M149.5 85V197" stroke="#b4b2b0" stroke-width="1"/><path d="M467.5 85V197" stroke="#b4b2b0" stroke-width="1"/><path d="M769.5 85V197" stroke="#b4b2b0" stroke-width="1"/><path d="M953.5 85V197" stroke="#b4b2b0" stroke-width="1"/><path d="M1404.5 85V197" stroke="#b4b2b0" stroke-width="1"/><path d="M1574.5 85V197" stroke="#b4b2b0" stroke-width="1"/><path d="M1863.5 85V197" stroke="#b4b2b0" stroke-width="1"/><path d="M135.5 195.0V187.5H143" stroke="#777" stroke-width="1" fill="none"/><path d="M139.3 191.3L143 195.0" stroke="#777" stroke-width="1"/><path d="M144 192.3V196.0H140.3Z" fill="#777"/><path d="M453.5 195.0V187.5H461" stroke="#777" stroke-width="1" fill="none"/><path d="M457.3 191.3L461 195.0" stroke="#777" stroke-width="1"/><path d="M462 192.3V196.0H458.3Z" fill="#777"/><path d="M755.5 195.0V187.5H763" stroke="#777" stroke-width="1" fill="none"/><path d="M759.3 191.3L763 195.0" stroke="#777" stroke-width="1"/><path d="M764 192.3V196.0H760.3Z" fill="#777"/><path d="M939.5 195.0V187.5H947" stroke="#777" stroke-width="1" fill="none"/><path d="M943.3 191.3L947 195.0" stroke="#777" stroke-width="1"/><path d="M948 192.3V196.0H944.3Z" fill="#777"/><path d="M1898.7 193.3L1903.5 188.5L1908.3 193.3" stroke="#666" stroke-width="1.5" fill="none"/><g transform="translate(21,90)"><path d="M1.5 6.5H25.5V30.5H1.5Z" fill="#ebebeb" stroke="#c9c9c9" stroke-width="2.6"/><path d="M7 9V5H10C10 0.5 17 0.5 17 5H20V9Z" fill="#f3f2f1" stroke="#c9c9c9" stroke-width="1.6"/><path d="M17.5 16.5H33.5V37.5H17.5Z" fill="#ececec" stroke="#c3c3c3" stroke-width="1.8"/></g><path d="M34.0 157.75h6l-3.0 3.5z" fill="#c8c8c8"/><g transform="translate(67,91)"><path d="M3 0.5L10 14 M11 0.5L4 14" stroke="#444" stroke-width="1.3" fill="none"/><circle cx="3" cy="17" r="2.3" fill="none" stroke="#2a8dd4" stroke-width="1.4"/><circle cx="11" cy="17" r="2.3" fill="none" stroke="#2a8dd4" stroke-width="1.4"/></g><g transform="translate(64,120)"><path d="M5.5 16.5H0.8V0.8H8.5L10.5 3" fill="none" stroke="#444" stroke-width="1.5"/><path d="M7.8 4.8H15L19.8 9.5V19.8H7.8Z" fill="#fff" stroke="#444" stroke-width="1.5"/><path d="M14.8 5V9.8H19.5" fill="none" stroke="#444" stroke-width="1.2"/><path d="M11 13H17M11 16H17" stroke="#555" stroke-width="1.1"/></g><path d="M127.75 128.75h6.5l-3.25 3.5z" fill="#666"/><g transform="translate(64,148)"><path d="M14.5 0.8L19.5 3.5L16.5 10.5L10 7Z" fill="#fff" stroke="#444" stroke-width="1.5"/><path d="M10 6.5L0.8 11L9 19L15 10.5Z" fill="#fff" stroke="#ee7b2e" stroke-width="1.5"/><path d="M4 13L9 18L12 14Z" fill="#fbd29c"/></g><path d="M410.4 114.8L415.3 102.6L420.2 114.8 M412.2 110.4H418.4" stroke="#444" stroke-width="1.25" fill="none"/><path d="M420.4 104.6L423.1 101.8L425.8 104.6" stroke="#2a8dd4" stroke-width="1.8" fill="none"/><path d="M438.2 114.8L442.5 104.4L446.8 114.8 M439.8 111H445.2" stroke="#444" stroke-width="1.2" fill="none"/><path d="M448.3 101.6L451 104.4L453.7 101.6" stroke="#2a8dd4" stroke-width="1.8" fill="none"/><path d="M223.7 156.8H235.2" stroke="#444" stroke-width="1.6"/><path d="M247.75 148.75h6.5l-3.25 3.5z" fill="#666"/><path d="M263.5 138.5V162.5" stroke="#d2d0ce" stroke-width="1"/><rect x="272.5" y="140.5" width="18" height="16" fill="#f9f9f9" stroke="#c6c6c6" stroke-width="1" stroke-dasharray="2.4 1.2"/><path d="M281.5 140.5V156.5 M272.5 148.9H290.5" stroke="#cdcdcd" stroke-width="1" stroke-dasharray="2.4 1.2" fill="none"/><path d="M272 158H291" stroke="#666" stroke-width="1.6"/><path d="M299.75 148.75h6.5l-3.25 3.5z" fill="#666"/><path d="M315.5 138.5V162.5" stroke="#d2d0ce" stroke-width="1"/><rect x="323.8" y="155" width="20.3" height="5" fill="#ffff00"/><path d="M333.4 141.6L339.6 147.8L332.8 153.7L327.4 148.4Z" fill="#fafafa" stroke="#3a3a3a" stroke-width="1.4" stroke-linejoin="round"/><path d="M333.6 143.6V141.2C333.8 139.9 336.3 139.9 336.5 141.2V146.4" fill="none" stroke="#555" stroke-width="1.3"/><path d="M338.6 144.6C340.6 144.4 341.6 146.5 341.3 152.6C340.3 150.4 339.9 148.2 339.3 147.4Z" fill="#2472b8" stroke="#2472b8" stroke-width="0.8"/><path d="M351.75 148.75h6.5l-3.25 3.5z" fill="#666"/><path d="M371.9 153.3L377.3 140.3L382.8 153.3 M373.9 148.7H380.8" stroke="#444" stroke-width="1.3" fill="none"/><rect x="366.9" y="155" width="20.2" height="5" fill="#ff0000"/><path d="M394.75 148.75h6.5l-3.25 3.5z" fill="#666"/><path d="M410.5 138.5V162.5" stroke="#d2d0ce" stroke-width="1"/><path d="M446.75 148.75h6.5l-3.25 3.5z" fill="#666"/><rect x="506" y="97" width="28" height="27" fill="#c8c8c8"/><path d="M483 100.5H501" stroke="#555" stroke-width="1.3"/><path d="M486 105.5H498" stroke="#555" stroke-width="1.3"/><path d="M483 110.5H501" stroke="#555" stroke-width="1.3"/><path d="M511 104.5H529" stroke="#555" stroke-width="1.3"/><path d="M514 109.5H526" stroke="#555" stroke-width="1.3"/><path d="M511 114.5H529" stroke="#555" stroke-width="1.3"/><path d="M539 109.3H557" stroke="#555" stroke-width="1.3"/><path d="M542 114.3H554" stroke="#555" stroke-width="1.3"/><path d="M539 119.3H557" stroke="#555" stroke-width="1.3"/><path d="M566.5 98V123" stroke="#d2d0ce" stroke-width="1"/><text x="0" y="0" font-size="13" fill="#444" transform="translate(578.6,111.6) rotate(-45)" font-family="Liberation Sans">ab</text><path d="M581.6 118.5L594.3 105.8 M588.6 105.6H594.5V111.5" stroke="#2a8dd4" stroke-width="1.5" fill="none"/><path d="M598.75 108.75h6.5l-3.25 3.5z" fill="#666"/><path d="M631.5 92V168" stroke="#d2d0ce" stroke-width="1"/><text x="642.6" y="109" font-size="12" fill="#666" font-family="Liberation Sans" letter-spacing="0.3">ab</text><text x="642.8" y="118.7" font-size="12" fill="#666" font-family="Liberation Sans">c</text><path d="M659.3 110.2C659.6 113.5 657.5 115.8 651.4 115.8 M654.7 112.4L651.2 115.8L654.7 119.3" stroke="#2a8dd4" stroke-width="1.5" fill="none"/><path d="M483 140.8H501" stroke="#666" stroke-width="1.6"/><path d="M483 145.8H496" stroke="#666" stroke-width="1.6"/><path d="M483 150.8H501" stroke="#666" stroke-width="1.6"/><path d="M483 155.9H496" stroke="#666" stroke-width="1.6"/><path d="M511 140.8H529" stroke="#666" stroke-width="1.6"/><path d="M514 145.8H526" stroke="#666" stroke-width="1.6"/><path d="M511 150.8H529" stroke="#666" stroke-width="1.6"/><path d="M514 155.9H526" stroke="#666" stroke-width="1.6"/><path d="M539 140.8H557" stroke="#666" stroke-width="1.6"/><path d="M544 145.8H557" stroke="#666" stroke-width="1.6"/><path d="M539 150.8H557" stroke="#666" stroke-width="1.6"/><path d="M544 155.9H557" stroke="#666" stroke-width="1.6"/><path d="M566.5 137V162" stroke="#d2d0ce" stroke-width="1"/><path d="M576 140.8H594" stroke="#666" stroke-width="1.6"/><path d="M586 145.8H594" stroke="#666" stroke-width="1.6"/><path d="M586 150.8H594" stroke="#666" stroke-width="1.6"/><path d="M576 155.9H594" stroke="#666" stroke-width="1.6"/><path d="M584 148.3H577 M580 145L576.7 148.3L580 151.6" stroke="#2a8dd4" stroke-width="1.7" fill="none"/><path d="M604 140.8H622" stroke="#666" stroke-width="1.6"/><path d="M614 145.8H622" stroke="#666" stroke-width="1.6"/><path d="M614 150.8H622" stroke="#666" stroke-width="1.6"/><path d="M604 155.9H622" stroke="#666" stroke-width="1.6"/><path d="M604 148.3H611 M608 145L611.3 148.3L608 151.6" stroke="#2a8dd4" stroke-width="1.7" fill="none"/><path d="M640.8 143.5V140H658.2V143.5 M649.5 140V143.5 M640.8 153.5V157H658.2V153.5 M649.5 153.5V157" stroke="#666" stroke-width="1.5" fill="none"/><rect x="640.8" y="143.6" width="17.4" height="9.8" fill="#fdfdfd" stroke="#1e7fcb" stroke-width="1.5"/><path d="M643.5 148.5H655.5 M646 146L643.3 148.5L646 151 M653 146L655.7 148.5L653 151" stroke="#2a8dd4" stroke-width="1.3" fill="none"/><path d="M748.75 148.25h6.5l-3.25 3.5z" fill="#666"/><rect x="784.7" y="144.4" width="18.6" height="11.4" fill="#fbfbfb" stroke="#3a3a3a" stroke-width="1.5"/><path d="M790 147C787.8 148.2 787.8 152 790 153.3 M793.6 147C791.4 148.2 791.4 152 793.6 153.3" stroke="#555" stroke-width="1.3" fill="none"/><path d="M797 147.2H800.5" stroke="#777" stroke-width="1.2"/><path d="M794.6 151V157.6C794.6 160.2 803.6 160.2 803.6 157.6V151" fill="#fff" stroke="#ee7b2e" stroke-width="1.3"/><ellipse cx="799.1" cy="150.9" rx="4.5" ry="1.7" fill="#fff" stroke="#ee7b2e" stroke-width="1.3"/><path d="M794.6 154.2C794.6 156.6 803.6 156.6 803.6 154.2" fill="none" stroke="#ee7b2e" stroke-width="1.2"/><path d="M811.75 148.65h6.5l-3.25 3.5z" fill="#666"/><circle cx="832" cy="145.9" r="3.6" fill="none" stroke="#444" stroke-width="1.35"/><circle cx="841.9" cy="154.4" r="3.6" fill="none" stroke="#444" stroke-width="1.35"/><path d="M842.6 141.2L831.4 158.6" stroke="#444" stroke-width="1.35"/><path d="M865.6 142.4C868.6 142.4 870 144.6 870 147.4C870 151.6 867.4 155.4 861.6 157.8L861.1 156.6C864.6 155 866.3 153 866.6 150.6C863.4 151.4 860.9 149.6 860.9 146.8C860.9 144.2 862.9 142.4 865.6 142.4Z" fill="#3a3a3a"/><path d="M883.5 138V163" stroke="#d2d0ce" stroke-width="1"/><path d="M903.4 145.6H893 M896.6 141.8L892.8 145.6L896.6 149.4" stroke="#2a8dd4" stroke-width="1.5" fill="none"/><text x="905" y="148.8" font-size="11" fill="#666" font-family="Liberation Sans" letter-spacing="-0.4">0</text><text x="894.4" y="159" font-size="11" fill="#666" font-family="Liberation Sans" letter-spacing="-0.4">.00</text><text x="922.4" y="148.8" font-size="11" fill="#666" font-family="Liberation Sans" letter-spacing="-0.4">.00</text><path d="M920 154.5H930.2 M926.6 150.7L930.4 154.5L926.6 158.3" stroke="#2a8dd4" stroke-width="1.5" fill="none"/><text x="929.4" y="159" font-size="11" fill="#666" font-family="Liberation Sans" letter-spacing="-0.4">.0</text><rect x="979.1" y="94.9" width="34" height="26.2" fill="#fcfcfc" stroke="#666" stroke-width="1.4"/><path d="M979 103.5H1013 M979 112.2H1013 M985.2 95V121 M1007 95V121" stroke="#666" stroke-width="1.2" fill="none"/><rect x="985.4" y="95" width="15" height="8.3" fill="#ff959c" stroke="#dc3a30" stroke-width="1.3"/><rect x="985.4" y="103.7" width="10.4" height="8.2" fill="#83bdec"/><path d="M985.4 103.7V112 M995.8 103.7V112" stroke="#1e6fbe" stroke-width="1.3"/><rect x="985.4" y="112.4" width="17.6" height="8.6" fill="#ff959c" stroke="#dc3a30" stroke-width="1.3"/><path d="M994.75 157.75h6.5l-3.25 3.5z" fill="#666"/><rect x="1049" y="94.9" width="34" height="26.2" fill="#fcfcfc" stroke="#666" stroke-width="1.4"/><path d="M1049 103.5H1083 M1049 112.2H1083 M1060.6 95V121 M1071.8 95V121" stroke="#666" stroke-width="1.2" fill="none"/><rect x="1060.6" y="103.5" width="23.2" height="18.2" fill="#83bdec"/><path d="M1060.6 112.2H1083.8 M1060.6 103.5V121.7 M1071.8 103.5V121.7 M1060.6 103.5H1083.8V121.7H1076" stroke="#1e72c4" stroke-width="1.3" fill="none"/><path d="M1085.3 104.2L1070.4 119.4" stroke="#f3f2f1" stroke-width="5.5" stroke-linecap="round"/><path d="M1086 103.2C1087.2 104.2 1086.4 105.6 1085.4 106.6L1073 120.4L1069.6 117.6L1083 104C1084 103 1085.2 102.5 1086 103.2Z" fill="#fdfdfd" stroke="#3a3a3a" stroke-width="1.2"/><path d="M1068.4 117.6C1065 116.6 1062.6 119.6 1062.2 122C1061 123.6 1059 124.2 1057.6 124.2C1060.4 127.6 1066.6 128.6 1070.4 125.6C1072.8 123.6 1073 121.4 1072.4 120.4Z" fill="#7db9ec" stroke="#1e72c4" stroke-width="1.2"/><path d="M1094.75 157.75h6.5l-3.25 3.5z" fill="#666"/><rect x="1422.5" y="94.9" width="35" height="26.2" fill="#fcfcfc" stroke="#666" stroke-width="1.4"/><path d="M1422.5 103.6H1457.5 M1422.5 112.4H1457.5 M1434.5 95V121 M1445.8 95V121" stroke="#666" stroke-width="1.2" fill="none"/><rect x="1428.5" y="103.4" width="31" height="9.2" fill="#83bdec" stroke="#1e72c4" stroke-width="1.4"/><path d="M1437 103.4V112.6 M1448.6 103.4V112.6" stroke="#1e72c4" stroke-width="1.3"/><path d="M1437 108H1423" stroke="#fdfdfd" stroke-width="3.2"/><path d="M1437 106.7H1423 M1437 109.4H1423" stroke="#2a8dd4" stroke-width="1"/><path d="M1429 99.4L1420.6 107.9L1429 116.2" stroke="#2a8dd4" stroke-width="1.6" fill="none"/><path d="M1438.25 157.75h6.5l-3.25 3.5z" fill="#666"/><rect x="1473.2" y="94.9" width="33.6" height="8.7" fill="#fcfcfc"/><rect x="1473.2" y="112.4" width="33.6" height="8.7" fill="#fcfcfc"/><path d="M1473.2 103.6V94.9H1506.8V99.5 M1473.2 103.6H1492 M1484.5 95V103.6 M1495.8 95V101 M1473.2 112.4V121.1H1506.8V117 M1473.2 112.4H1492 M1484.5 112.4V121 M1495.8 116V121" stroke="#666" stroke-width="1.4" fill="none"/><path d="M1477.8 103.4H1494.6L1498.4 108L1494.6 112.6H1477.8Z" fill="#83bdec" stroke="#1e72c4" stroke-width="1.4"/><path d="M1489 103.4V112.6" stroke="#1e72c4" stroke-width="1.3"/><path d="M1494.8 101.2L1509 115.6 M1509 101.2L1494.8 115.6" stroke="#e8403c" stroke-width="1.5"/><path d="M1488.25 157.75h6.5l-3.25 3.5z" fill="#666"/><rect x="1522.5" y="94.9" width="35" height="26.2" fill="#fcfcfc" stroke="#666" stroke-width="1.4"/><path d="M1522.5 103.6H1557.5 M1522.5 112.4H1557.5 M1531.7 95V121 M1548.3 95V121" stroke="#666" stroke-width="1.2" fill="none"/><rect x="1531.7" y="103.4" width="16.6" height="9.2" fill="#83bdec" stroke="#1e72c4" stroke-width="1.4"/><path d="M1530.4 88V92 M1549.6 88V92 M1530.4 90H1549.6" stroke="#2a8dd4" stroke-width="1.5" fill="none"/><path d="M1538.45 157.75h6.5l-3.25 3.5z" fill="#666"/><path d="M1606.2 92.6V89.7H1592L1600 98L1592 106.3H1606.2V103.4" stroke="#444" stroke-width="1.4" fill="none"/><path d="M1682.75 97.05h6.5l-3.25 3.5z" fill="#666"/><rect x="1589.7" y="116.8" width="18.4" height="16.3" fill="#fcfcfc" stroke="#444" stroke-width="1.4"/><path d="M1589.7 118.3H1608" stroke="#777" stroke-width="2.2"/><path d="M1598.4 121.4V130.4 M1594.8 127L1598.4 130.6L1602 127" stroke="#2a8dd4" stroke-width="1.4" fill="none"/><path d="M1645.85 124.65h6.5l-3.25 3.5z" fill="#666"/><path d="M1601.4 143L1607.7 149.4L1596 160.8L1589.9 154.3Z" fill="#fafafa" stroke="#a63cb0" stroke-width="1.4" stroke-linejoin="round"/><path d="M1594.3 150.2L1600.6 156.4L1596 160.8L1589.9 154.3Z" fill="#d590dc" stroke="#a63cb0" stroke-width="1.2" stroke-linejoin="round"/><path d="M1645.85 151.65h6.5l-3.25 3.5z" fill="#666"/><path d="M1716.9 106.6L1722.6 92.2L1728.3 106.6 M1719 101.4H1726.2" stroke="#2a8dd4" stroke-width="1.5" fill="none"/><path d="M1717.6 110.1H1727L1717.6 123.2H1727.4" stroke="#444" stroke-width="1.4" fill="none"/><path d="M1732.2 99.9H1751V102.6L1743.6 109.6V118.2H1739.4V109.6L1732.2 102.6Z" fill="#fbfbfb" stroke="#444" stroke-width="1.3" stroke-linejoin="round"/><path d="M1732.75 157.75h6.5l-3.25 3.5z" fill="#666"/><circle cx="1818.4" cy="103.3" r="12.4" fill="#fafafa" stroke="#444" stroke-width="1.4"/><path d="M1809.4 112.4L1795.6 126.4" stroke="#444" stroke-width="1.5"/><path d="M1812.55 157.75h6.5l-3.25 3.5z" fill="#666"/></svg>
<div style="left:0px;top:43px;width:1920px;height:159px;background:#f3f2f1;"></div>
<div style="left:0px;top:201px;width:1920px;height:1px;background:#d8d6d4;"></div>
<div class="t" style="left:17px;top:51.0px;font-size:15.9px;line-height:22px;letter-spacing:1.1px;color:#444;">文件</div>
<div class="t" style="left:82px;top:51.0px;font-size:15.9px;line-height:22px;letter-spacing:1.1px;color:#333;font-weight:700;">开始</div>
<div class="t" style="left:143px;top:51.0px;font-size:15.9px;line-height:22px;letter-spacing:1.1px;color:#444;">插入</div>
<div class="t" style="left:204px;top:51.0px;font-size:15.9px;line-height:22px;letter-spacing:1.1px;color:#444;">页面布局</div>
<div class="t" style="left:298px;top:51.0px;font-size:15.9px;line-height:22px;letter-spacing:1.1px;color:#444;">公式</div>
<div class="t" style="left:360px;top:51.0px;font-size:15.9px;line-height:22px;letter-spacing:1.1px;color:#444;">数据</div>
<div class="t" style="left:421px;top:51.0px;font-size:15.9px;line-height:22px;letter-spacing:1.1px;color:#444;">审阅</div>
<div class="t" style="left:482px;top:51.0px;font-size:15.9px;line-height:22px;letter-spacing:1.1px;color:#444;">视图</div>
<div class="t" style="left:543px;top:51.0px;font-size:15.9px;line-height:22px;letter-spacing:1.1px;color:#444;">帮助</div>
<div style="left:82px;top:75px;width:35px;height:4px;background:#217346;"></div>
<div class="t" style="left:635px;top:51.0px;font-size:15.9px;line-height:22px;letter-spacing:1.1px;color:#444;">搜索</div>
<div style="left:1829px;top:47px;width:75.5px;height:29.5px;background:#fdfdfd;border:1px solid #e1dfdd;border-radius:4px;"></div>
<div class="t" style="left:1859px;top:51.0px;font-size:15.9px;line-height:22px;letter-spacing:1.1px;color:#b4b4b4;font-weight:700;">共享</div>
<div class="t" style="left:-35.0px;top:180.0px;font-size:14.0px;line-height:20px;letter-spacing:1.0px;color:#444;width:200px;text-align:center;">剪贴板</div>
<div class="t" style="left:198.5px;top:180.0px;font-size:14.0px;line-height:20px;letter-spacing:1.0px;color:#444;width:200px;text-align:center;">字体</div>
<div class="t" style="left:508.5px;top:180.0px;font-size:14.0px;line-height:20px;letter-spacing:1.0px;color:#444;width:200px;text-align:center;">对齐方式</div>
<div class="t" style="left:751.5px;top:180.0px;font-size:14.0px;line-height:20px;letter-spacing:1.0px;color:#444;width:200px;text-align:center;">数字</div>
<div class="t" style="left:1079.5px;top:180.0px;font-size:14.0px;line-height:20px;letter-spacing:1.0px;color:#444;width:200px;text-align:center;">样式</div>
<div class="t" style="left:1389.5px;top:180.0px;font-size:14.0px;line-height:20px;letter-spacing:1.0px;color:#444;width:200px;text-align:center;">单元格</div>
<div class="t" style="left:1619.5px;top:180.0px;font-size:14.0px;line-height:20px;letter-spacing:1.0px;color:#444;width:200px;text-align:center;">编辑</div>
<div class="t" style="left:5.5px;top:130.0px;font-size:14.0px;line-height:20px;letter-spacing:1.0px;color:#b3b3b3;width:60px;text-align:center;">粘贴</div>
<div class="t" style="left:87px;top:92.0px;font-size:14.0px;line-height:20px;letter-spacing:1.0px;color:#444;">剪切</div>
<div class="t" style="left:87px;top:120.5px;font-size:14.0px;line-height:20px;letter-spacing:1.0px;color:#444;">复制</div>
<div class="t" style="left:87px;top:149.5px;font-size:14.0px;line-height:20px;letter-spacing:1.0px;color:#444;">格式刷</div>
<div style="left:160px;top:97px;width:195px;height:28px;background:#fff;border:1px solid #c6c6c6;"></div>
<div class="t" style="left:162.5px;top:101.5px;font-size:14.0px;line-height:20px;letter-spacing:1.0px;color:#444;">等线</div>
<div style="left:355px;top:97px;width:47px;height:28px;background:#fff;border:1px solid #c6c6c6;"></div>
<div class="t" style="left:359.5px;top:102.0px;font-size:14.5px;line-height:19px;color:#444;letter-spacing:0.6px;">11</div>
<div class="t" style="left:169.3px;top:136.7px;font-size:18px;line-height:24px;color:#3a3a3a;font-weight:700;transform:scaleX(.78);transform-origin:0 50%;">B</div>
<div class="t" style="left:197.5px;top:136.7px;font-size:18.5px;line-height:24px;color:#3a3a3a;font-weight:700;font-family:'Liberation Serif',serif;"><i>I</i></div>
<div class="t" style="left:224.2px;top:137.4px;font-size:17px;line-height:22px;color:#3a3a3a;transform:scaleX(.82);transform-origin:0 50%;">U</div>
<div class="t" style="left:420.3px;top:136.2px;font-size:11px;line-height:15px;color:#666;letter-spacing:-0.2px;">wén</div>
<div class="t" style="left:424.3px;top:148.7px;font-size:9.5px;line-height:13px;color:#3a96dd;">文</div>
<div class="t" style="left:664px;top:101.0px;font-size:14.0px;line-height:20px;letter-spacing:1.0px;color:#444;">自动换行</div>
<div class="t" style="left:663.5px;top:140.0px;font-size:14.0px;line-height:20px;letter-spacing:1.0px;color:#444;">合并后居中</div>
<div style="left:780px;top:97px;width:164px;height:28px;background:#fff;border:1px solid #c6c6c6;"></div>
<div class="t" style="left:784px;top:101.5px;font-size:14.0px;line-height:20px;letter-spacing:1.0px;color:#444;">常规</div>
<div class="t" style="left:896.5px;top:130.5px;font-size:14.0px;line-height:20px;letter-spacing:1.0px;color:#444;width:200px;text-align:center;">条件格式</div>
<div class="t" style="left:966.5px;top:130.5px;font-size:14.0px;line-height:20px;letter-spacing:1.0px;color:#444;width:200px;text-align:center;">套用</div>
<div class="t" style="left:961.5px;top:149.5px;font-size:14.0px;line-height:20px;letter-spacing:1.0px;color:#444;width:200px;text-align:center;">表格格式</div>
<div style="left:1105px;top:88px;width:287px;height:78px;background:#fff;border:1px solid #c6c6c6;"></div>
<div style="left:1105.5px;top:91px;width:133.5px;height:36px;background:#fff;border:4px solid #c6c6c6;"></div>
<div class="t" style="left:1116.5px;top:99.0px;font-size:17px;line-height:22px;color:#000;font-weight:300;">常规</div>
<div style="left:1243px;top:95px;width:125px;height:28px;background:#ffc7ce;"></div>
<div class="t" style="left:1249px;top:99.0px;font-size:17px;line-height:22px;color:#9c0006;font-weight:300;">差</div>
<div style="left:1110px;top:131px;width:125px;height:28px;background:#c6efce;"></div>
<div class="t" style="left:1115.5px;top:135.0px;font-size:17px;line-height:22px;color:#006100;font-weight:300;">好</div>
<div style="left:1243px;top:131px;width:125px;height:28px;background:#ffeb9c;"></div>
<div class="t" style="left:1249px;top:135.0px;font-size:17px;line-height:22px;color:#9c5700;font-weight:300;">适中</div>
<div style="left:1372.5px;top:88px;width:19.5px;height:27px;background:#e6e6e6;border:1px solid #c6c6c6;"></div>
<div style="left:1372.5px;top:114.5px;width:19.5px;height:24px;background:#fff;border:1px solid #c6c6c6;"></div>
<div style="left:1372.5px;top:138px;width:19.5px;height:28px;background:#fff;border:1px solid #c6c6c6;"></div>
<div class="t" style="left:1340.5px;top:130.0px;font-size:14.0px;line-height:20px;letter-spacing:1.0px;color:#444;width:200px;text-align:center;">插入</div>
<div class="t" style="left:1390.5px;top:130.0px;font-size:14.0px;line-height:20px;letter-spacing:1.0px;color:#444;width:200px;text-align:center;">删除</div>
<div class="t" style="left:1440.5px;top:130.0px;font-size:14.0px;line-height:20px;letter-spacing:1.0px;color:#444;width:200px;text-align:center;">格式</div>
<div class="t" style="left:1612.8px;top:89.2px;font-size:14.0px;line-height:20px;letter-spacing:1.0px;color:#444;">自动求和</div>
<div class="t" style="left:1612.3px;top:116.2px;font-size:14.0px;line-height:20px;letter-spacing:1.0px;color:#444;">填充</div>
<div class="t" style="left:1612.3px;top:143.0px;font-size:14.0px;line-height:20px;letter-spacing:1.0px;color:#444;">清除</div>
<div class="t" style="left:1634.0px;top:130.0px;font-size:14.0px;line-height:20px;letter-spacing:1.0px;color:#444;width:200px;text-align:center;">排序和筛选</div>
<div class="t" style="left:1714.0px;top:130.0px;font-size:14.0px;line-height:20px;letter-spacing:1.0px;color:#444;width:200px;text-align:center;">查找和选择</div>
<svg class="i" style="left:0;top:0;z-index:3" width="1920" height="202" viewBox="0 0 1920 202"><path d="M343.45 109.55h6.5l-3.25 3.5z" fill="#666"/><path d="M390.45 109.55h6.5l-3.25 3.5z" fill="#666"/><path d="M932.55 109.55h6.5l-3.25 3.5z" fill="#666"/><path d="M1380 103.5h6l-3 -3.5z" fill="#c0c0c0"/><path d="M1380.0 125.25h6l-3.0 3.5z" fill="#666"/><path d="M1380 149h6" stroke="#666" stroke-width="1.3"/><path d="M1380.0 151.55h6l-3.0 3.5z" fill="#666"/></svg>
<div style="left:0px;top:242px;width:1920px;height:1px;background:#e3e3e3;"></div>
<div style="left:0px;top:237px;width:1920px;height:6px;background:linear-gradient(#cfcfcf,#e6e6e6);"></div>
<div style="left:0px;top:202px;width:1920px;height:35px;background:#fcf7b6;border-top:1px solid #dcd893;border-bottom:1px solid #e4dfa0;"></div>
<div style="left:9.2px;top:206.8px;width:27.8px;height:27.8px;border:2px solid #2b88d8;border-radius:50%;background:#fff;"></div>
<div style="left:21.5px;top:212.3px;width:3.4px;height:3.4px;background:#2b88d8;border-radius:50%;"></div>
<div style="left:21.8px;top:217.5px;width:2.8px;height:11.3px;background:#2b88d8;"></div>
<div class="t" style="left:46.5px;top:209.5px;font-size:14.0px;line-height:20px;letter-spacing:1.0px;color:#333;font-weight:700;">可能的数据丢失</div>
<div class="t" style="left:160.5px;top:209.5px;font-size:14.0px;line-height:20px;letter-spacing:1.0px;color:#333;">如果将此工作簿以逗号分隔<span class="l">(.csv)</span>格式保存，则某些功能可能会丢失。若要保留这些功能，请以<span class="l"> Excel </span>文件格式保存。</div>
<div style="left:956px;top:207px;width:94px;height:26px;background:#fff;border:1px solid #ababab;"></div>
<div class="t" style="left:956.5px;top:209.5px;font-size:14.0px;line-height:20px;letter-spacing:1.0px;color:#333;width:94px;text-align:center;">不再显示</div>
<div style="left:1061px;top:207px;width:91px;height:26px;background:#fff;border:1px solid #ababab;"></div>
<div class="t" style="left:1061.5px;top:209.5px;font-size:14.0px;line-height:20px;letter-spacing:1.0px;color:#333;width:91px;text-align:center;">另存为...</div>
<svg class="i" style="left:1898.5px;top:215.5px;" width="8" height="8" viewBox="0 0 8 8"><path d="M0.5 0.5L7.5 7.5M7.5 0.5L0.5 7.5" stroke="#555" stroke-width="1.8"/></svg>
<div style="left:6px;top:250px;width:127px;height:32px;background:#fff;border:1px solid #c6c6c6;"></div>
<div class="t" style="left:13px;top:255.8px;font-size:15.5px;line-height:21px;color:#333;letter-spacing:0.4px;">A1</div>
<svg class="i" style="left:117.5px;top:263.7px;" width="8" height="4" viewBox="0 0 8 4"><path d="M0 0H8L4.0 4Z" fill="#777"/></svg>
<div style="left:150px;top:259px;width:3px;height:3px;background:#b8b8b8;"></div>
<div style="left:150px;top:264px;width:3px;height:3px;background:#b8b8b8;"></div>
<div style="left:150px;top:269px;width:3px;height:3px;background:#b8b8b8;"></div>
<div style="left:170px;top:250px;width:137px;height:32px;background:#fff;border:1px solid #c6c6c6;"></div>
<svg class="i" style="left:186px;top:260px;" width="14" height="13" viewBox="0 0 14 13"><path d="M1 1L13 12M13 1L1 12" stroke="#bcbcbc" stroke-width="1.8" fill="none"/></svg>
<svg class="i" style="left:230px;top:259px;" width="17" height="14" viewBox="0 0 17 14"><path d="M1 8L6 13L16 1" stroke="#c6c6c6" stroke-width="2.4" fill="none"/></svg>
<div class="t" style="left:274px;top:250.5px;font-size:20px;line-height:26px;color:#6a6a6a;font-weight:700;font-family:'Liberation Serif',serif;letter-spacing:0;"><i>f</i><i style="font-size:15.5px">x</i></div>
<div style="left:310px;top:250px;width:1604px;height:32px;background:#fff;border:1px solid #c6c6c6;"></div>
<div class="t" style="left:325px;top:255.0px;font-size:15.9px;line-height:22px;letter-spacing:1.1px;color:#333;">科类</div>
<svg class="i" style="left:1899px;top:262.5px;" width="9" height="7" viewBox="0 0 9 7"><path d="M0.7 1L4.5 5L8.3 1" stroke="#666" stroke-width="2.2" fill="none"/></svg>
<div style="left:0px;top:974px;width:1920px;height:28px;background:#e6e6e6;"></div>
<div style="left:0px;top:1002px;width:1920px;height:1px;background:#c8c8c8;"></div>
<svg class="i" style="left:28px;top:982px;" width="5" height="10" viewBox="0 0 5 10"><path d="M5 0V10L0 5Z" fill="#c3c3c3"/></svg>
<svg class="i" style="left:57px;top:982px;" width="5" height="10" viewBox="0 0 5 10"><path d="M0 0V10L5 5Z" fill="#c3c3c3"/></svg>
<div style="left:103px;top:973px;width:64px;height:26px;background:#fff;border-left:1px solid #c6c6c6;border-right:1px solid #c6c6c6;border-bottom:2px solid #217346;"></div>
<div class="t" style="left:103.0px;top:972.0px;font-size:18px;line-height:24px;color:#217346;width:64px;text-align:center;letter-spacing:-0.4px;">2016</div>
<div style="left:200.5px;top:978.5px;width:19px;height:19px;border:1.3px solid #8a8a8a;border-radius:50%;"></div>
<div style="left:205px;top:987.2px;width:10px;height:1.6px;background:#777;"></div>
<div style="left:209.2px;top:983px;width:1.6px;height:10px;background:#777;"></div>
<div style="left:1149px;top:981px;width:3px;height:3px;background:#b8b8b8;"></div>
<div style="left:1149px;top:986px;width:3px;height:3px;background:#b8b8b8;"></div>
<div style="left:1149px;top:991px;width:3px;height:3px;background:#b8b8b8;"></div>
<div style="left:1186px;top:978px;width:690px;height:19px;background:#d9d9d9;"></div>
<div style="left:1167px;top:978px;width:19px;height:19px;background:#fff;border:1px solid #c6c6c6;"></div>
<svg class="i" style="left:1173px;top:983px;" width="5" height="9" viewBox="0 0 5 9"><path d="M5 0V9L0 4.5Z" fill="#666"/></svg>
<div style="left:1186px;top:978px;width:660px;height:19px;background:#fff;border:1px solid #ababab;"></div>
<div style="left:1878px;top:978px;width:19px;height:19px;background:#fff;border:1px solid #cfcfcf;"></div>
<svg class="i" style="left:1885px;top:983px;" width="5" height="9" viewBox="0 0 5 9"><path d="M0 0V9L5 4.5Z" fill="#666"/></svg>
<div style="left:0px;top:1003px;width:1920px;height:24px;background:#f3f2f1;"></div>
<div class="t" style="left:1193px;top:1005.5px;font-size:14.5px;line-height:21px;letter-spacing:1.0px;color:#444;">平均值: 1051.150343</div>
<div class="t" style="left:1356px;top:1005.5px;font-size:14.5px;line-height:21px;letter-spacing:1.0px;color:#444;">计数: 12096</div>
<div class="t" style="left:1455px;top:1005.5px;font-size:14.5px;line-height:21px;letter-spacing:1.0px;color:#444;">求和: 4593527</div>
<div style="left:1576px;top:1003px;width:42px;height:24px;background:#c6c6c6;"></div>
<svg class="i" style="left:1589px;top:1008px;" width="16" height="16" viewBox="0 0 16 16"><path d="M0.7 0.7H15.3V15.3H0.7Z M0.7 5.55H15.3 M0.7 10.45H15.3 M5.55 0.7V15.3 M10.45 0.7V15.3" stroke="#666" stroke-width="1.2" fill="none"/></svg>
<svg class="i" style="left:1630px;top:1008px;" width="17" height="15" viewBox="0 0 17 15"><path d="M0.6 0.6H16.4V14.4H0.6Z M4.6 2.6H12.4V12.2H4.6Z" stroke="#666" stroke-width="1.1" fill="none"/><path d="M6.2 5.3H10.8 M6.2 7.4H10.8 M6.2 9.5H10.8" stroke="#666" stroke-width="0.9" fill="none"/></svg>
<svg class="i" style="left:1672px;top:1008px;" width="17" height="16" viewBox="0 0 17 16"><path d="M0.6 0.6H16.4V15.4H0.6Z M5.6 0.6V9.4H0.6 M10.8 0.6V9.4H5.6" stroke="#666" stroke-width="1.1" fill="none"/></svg>
<div style="left:1707px;top:1014.4px;width:10px;height:2px;background:#777;"></div>
<div style="left:1721px;top:1015.5px;width:125px;height:1px;background:#a0a0a0;"></div>
<div style="left:1781px;top:1009px;width:6px;height:14px;background:#777;"></div>
<div style="left:1850px;top:1014.5px;width:10px;height:2px;background:#555;"></div>
<div style="left:1854px;top:1010.5px;width:2px;height:10px;background:#555;"></div>
<div class="t" style="left:1873px;top:1005.5px;font-size:15.5px;line-height:21px;color:#505050;">100%</div>
<div style="left:774px;top:406px;width:612px;height:284px;background:#f0f0f0;border:1px solid #5c5c5c;box-shadow:0 4px 14px rgba(0,0,0,.38),0 0 3px rgba(0,0,0,.2);"></div>
<div style="left:775px;top:407px;width:610px;height:37px;background:#fff;"></div>
<div class="t" style="left:784px;top:416.0px;font-size:14.0px;line-height:20px;letter-spacing:1.0px;color:#000;">查找和替换</div>
<div class="t" style="left:1294px;top:415.0px;font-size:15px;line-height:20px;color:#000;">?</div>
<svg class="i" style="left:1349px;top:419px;" width="12" height="12" viewBox="0 0 12 12"><path d="M0.3 0.3L11.7 11.7M11.7 0.3L0.3 11.7" stroke="#000" stroke-width="1.1" fill="none"/></svg>
<div style="left:783px;top:486px;width:592px;height:144px;background:#fff;border:1px solid #dadada;"></div>
<div style="left:785px;top:456px;width:72px;height:31px;background:#f0f0f0;border:1px solid #dadada;border-bottom:none;border-right:none;"></div>
<div class="t" style="left:785.5px;top:462.5px;font-size:14.0px;line-height:20px;letter-spacing:1.0px;color:#000;width:72px;text-align:center;">查找(<u>D</u>)</div>
<div style="left:856.5px;top:454px;width:76.5px;height:33px;background:#fff;border:1px solid #dadada;border-bottom:none;"></div>
<div class="t" style="left:857.0px;top:461.0px;font-size:14.0px;line-height:20px;letter-spacing:1.0px;color:#000;width:76px;text-align:center;">替换(<u>P</u>)</div>
<div class="t" style="left:795px;top:507.0px;font-size:14.0px;line-height:20px;letter-spacing:1.0px;color:#000;">查找内容(<u>N</u>):</div>
<div style="left:893px;top:501px;width:472px;height:30px;background:#fff;border:1px solid #a0a0aa;"></div>
<div style="left:1343px;top:502px;width:21px;height:28px;background:#e1e1e1;border:1px solid #adadad;"></div>
<svg class="i" style="left:1349px;top:513px;" width="10" height="6" viewBox="0 0 10 6"><path d="M0.5 0.5L5 5L9.5 0.5" stroke="#555" stroke-width="1.1" fill="none"/></svg>
<div class="t" style="left:795px;top:542.0px;font-size:14.0px;line-height:20px;letter-spacing:1.0px;color:#000;">替换为(<u>E</u>):</div>
<div style="left:893px;top:536px;width:472px;height:30px;background:#fff;border:1px solid #a0a0aa;"></div>
<div style="left:1343px;top:537px;width:21px;height:28px;background:#e1e1e1;border:1px solid #adadad;"></div>
<svg class="i" style="left:1349px;top:548px;" width="10" height="6" viewBox="0 0 10 6"><path d="M0.5 0.5L5 5L9.5 0.5" stroke="#555" stroke-width="1.1" fill="none"/></svg>
<div class="t" style="left:898px;top:541.0px;font-size:14.0px;line-height:20px;letter-spacing:1.0px;color:#000;"><span style="letter-spacing:1px">--</span>无<span style="letter-spacing:1px">--</span></div>
<div style="left:1265px;top:581px;width:99px;height:34px;background:#e1e1e1;border:1px solid #adadad;"></div>
<div class="t" style="left:1265.5px;top:588.5px;font-size:14.0px;line-height:20px;letter-spacing:1.0px;color:#000;width:99px;text-align:center;">选项(<u>T</u>) <span style="letter-spacing:2.5px">&gt;&gt;</span></div>
<div style="left:783px;top:644px;width:104px;height:34px;background:#e1e1e1;border:2px solid #0078d7;"></div>
<div style="left:787px;top:648px;width:96px;height:26px;border:1px dotted #000;"></div>
<div class="t" style="left:783.5px;top:651.5px;font-size:14.0px;line-height:20px;letter-spacing:1.0px;color:#000;width:104px;text-align:center;">全部替换(<u>A</u>)</div>
<div style="left:900px;top:644px;width:99px;height:34px;background:#e1e1e1;border:1px solid #adadad;"></div>
<div class="t" style="left:900.5px;top:651.5px;font-size:14.0px;line-height:20px;letter-spacing:1.0px;color:#000;width:99px;text-align:center;">替换(<u>R</u>)</div>
<div style="left:1024px;top:644px;width:99px;height:34px;background:#e1e1e1;border:1px solid #adadad;"></div>
<div class="t" style="left:1024.5px;top:651.5px;font-size:14.0px;line-height:20px;letter-spacing:1.0px;color:#000;width:99px;text-align:center;">查找全部(<u>I</u>)</div>
<div style="left:1136px;top:644px;width:116px;height:34px;background:#e1e1e1;border:1px solid #adadad;"></div>
<div class="t" style="left:1136.5px;top:651.5px;font-size:14.0px;line-height:20px;letter-spacing:1.0px;color:#000;width:116px;text-align:center;">查找下一个(<u>F</u>)</div>
<div style="left:1277px;top:644px;width:99px;height:34px;background:#e1e1e1;border:1px solid #adadad;"></div>
<div class="t" style="left:1277.5px;top:651.5px;font-size:14.0px;line-height:20px;letter-spacing:1.0px;color:#000;width:99px;text-align:center;">关闭</div>

</body>
</html>
